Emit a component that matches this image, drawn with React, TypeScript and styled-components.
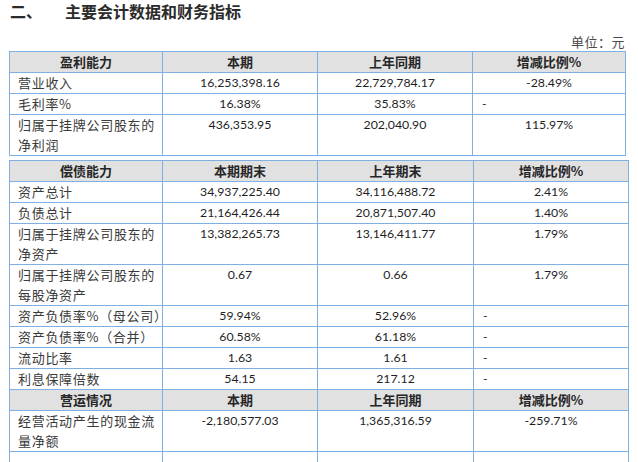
import React from 'react';
import styled, { createGlobalStyle } from 'styled-components';

const GlobalStyle = createGlobalStyle`
    body {
        margin: 0;
        background: #ffffff;
        font-family: "Noto Sans CJK SC", "Liberation Sans", sans-serif;
        color: #333333;
    }
`;

const Page = styled.div`
    width: 638px;
    height: 462px;
    overflow: hidden;
    padding: 0 0 0 9px;
    box-sizing: border-box;
`;

const Title = styled.h2`
    display: flex;
    margin: 0;
    padding: 1px 0 0 1px;
    height: 21px;
    font-size: 16px;
    line-height: 21px;
    font-weight: bold;
    color: #2b2b2b;
`;

const TitleIndex = styled.span`
    width: 55px;
`;

const Unit = styled.div`
    width: 616px;
    margin-top: 10px;
    height: 19px;
    text-align: right;
    font-size: 13px;
    line-height: 19px;
    letter-spacing: 0.5px;
    color: #4a4a4a;
`;

const Table = styled.table<{ $gap?: number }>`
    border-collapse: collapse;
    table-layout: fixed;
    margin-top: ${p => p.$gap ?? 0}px;
    font-size: 13px;
    line-height: 20px;
`;

const Col = styled.col<{ $w: number }>`
    width: ${p => p.$w}px;
`;

const HeadCell = styled.th`
    border: 1px solid #7fb0e2;
    background: #e1e1e1;
    padding: 0;
    font-weight: bold;
    text-align: center;
    color: #262626;
    height: 20px;
`;

const LabelCell = styled.td`
    border: 1px solid #7fb0e2;
    padding: 0 0 0 8px;
    vertical-align: top;
    letter-spacing: 0.7px;
    color: #3a3a3a;
    height: 20px;
`;

const NumCell = styled.td<{ $dash?: boolean }>`
    border: 1px solid #7fb0e2;
    padding: ${p => (p.$dash ? '0 0 0 9px' : '0')};
    vertical-align: top;
    text-align: ${p => (p.$dash ? 'left' : 'center')};
    font-family: Lato, "Liberation Sans", sans-serif;
    font-size: 12.3px;
    color: #1f1f1f;
`;

type Row = [string, string, string, string];

const profit: Row[] = [
    ['营业收入', '16,253,398.16', '22,729,784.17', '-28.49%'],
    ['毛利率%', '16.38%', '35.83%', '-'],
    ['归属于挂牌公司股东的净利润', '436,353.95', '202,040.90', '115.97%'],
];

const debt: Row[] = [
    ['资产总计', '34,937,225.40', '34,116,488.72', '2.41%'],
    ['负债总计', '21,164,426.44', '20,871,507.40', '1.40%'],
    ['归属于挂牌公司股东的净资产', '13,382,265.73', '13,146,411.77', '1.79%'],
    ['归属于挂牌公司股东的每股净资产', '0.67', '0.66', '1.79%'],
    ['资产负债率%（母公司）', '59.94%', '52.96%', '-'],
    ['资产负债率%（合并）', '60.58%', '61.18%', '-'],
    ['流动比率', '1.63', '1.61', '-'],
    ['利息保障倍数', '54.15', '217.12', '-'],
];

const ops: Row[] = [
    ['经营活动产生的现金流量净额', '-2,180,577.03', '1,365,316.59', '-259.71%'],
    ['', '', '', ''],
];

const Head: React.FC<{ cells: Row }> = ({ cells }) => (
    <tr>
        {cells.map((c, i) => <HeadCell key={i}>{c}</HeadCell>)}
    </tr>
);

const Body: React.FC<{ rows: Row[] }> = ({ rows }) => (
    <>
        {rows.map((r, i) => (
            <tr key={i}>
                <LabelCell>{r[0]}</LabelCell>
                <NumCell>{r[1]}</NumCell>
                <NumCell>{r[2]}</NumCell>
                <NumCell $dash={r[3] === '-'}>{r[3]}</NumCell>
            </tr>
        ))}
    </>
);

const Cols: React.FC<{ widths: number[] }> = ({ widths }) => (
    <colgroup>
        {widths.map((w, i) => <Col key={i} $w={w} />)}
    </colgroup>
);

const App: React.FC = () => (
    <Page>
        <GlobalStyle />
        <Title>
            <TitleIndex>二、</TitleIndex>
            <span>主要会计数据和财务指标</span>
        </Title>
        <Unit>单位：元</Unit>
        <Table>
            <Cols widths={[153, 155, 155, 153]} />
            <tbody>
                <Head cells={['盈利能力', '本期', '上年同期', '增减比例%']} />
                <Body rows={profit} />
            </tbody>
        </Table>
        <Table $gap={4}>
            <Cols widths={[153, 155, 156, 155]} />
            <tbody>
                <Head cells={['偿债能力', '本期期末', '上年期末', '增减比例%']} />
                <Body rows={debt} />
                <Head cells={['营运情况', '本期', '上年同期', '增减比例%']} />
                <Body rows={ops} />
            </tbody>
        </Table>
    </Page>
);

export default App;
